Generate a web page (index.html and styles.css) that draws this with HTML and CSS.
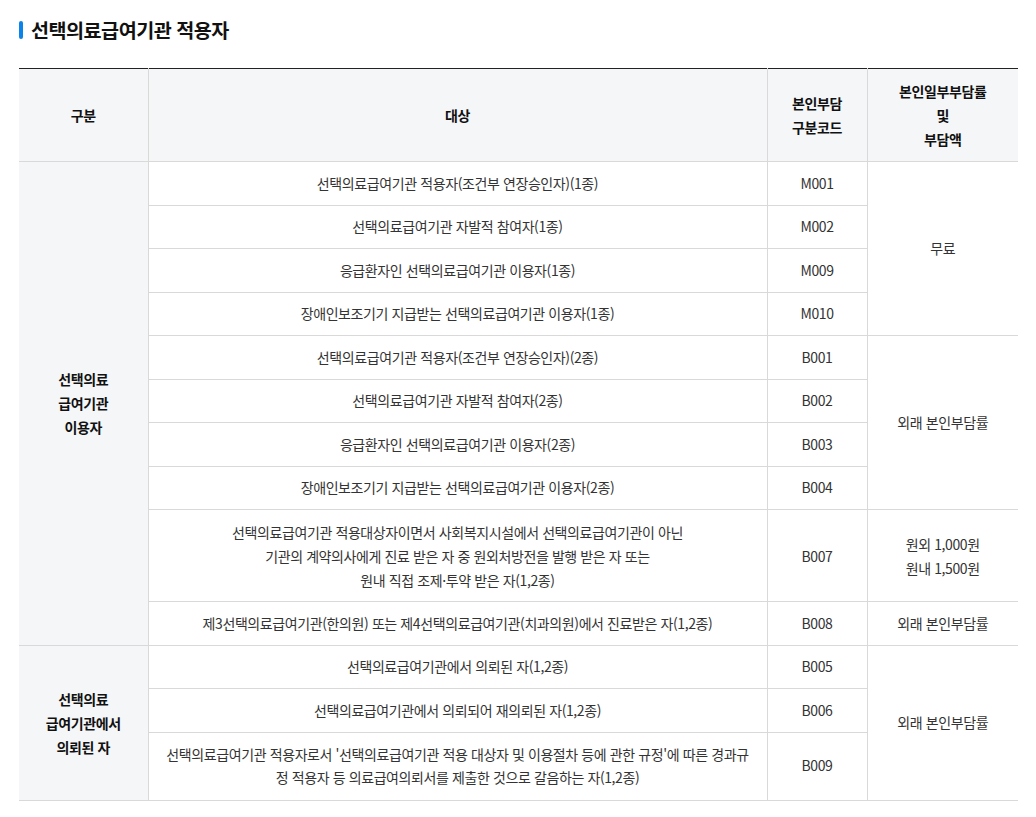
FILE: index.html
```html
<!DOCTYPE html>
<html lang="ko">
<head>
<meta charset="utf-8">
<link rel="stylesheet" href="styles.css">
</head>
<body>
<div class="wrap">
  <h2 class="title">선택의료급여기관 적용자</h2>
  <table class="tbl">
    <colgroup>
      <col class="c1"><col class="c2"><col class="c3"><col class="c4">
    </colgroup>
    <thead>
      <tr>
        <th>구분</th>
        <th>대상</th>
        <th>본인부담<br>구분코드</th>
        <th>본인일부부담률<br>및<br>부담액</th>
      </tr>
    </thead>
    <tbody>
      <tr>
        <th rowspan="10" class="grp">선택의료<br>급여기관<br>이용자</th>
        <td>선택의료급여기관 적용자(조건부 연장승인자)(1종)</td>
        <td>M001</td>
        <td rowspan="4">무료</td>
      </tr>
      <tr><td>선택의료급여기관 자발적 참여자(1종)</td><td>M002</td></tr>
      <tr><td>응급환자인 선택의료급여기관 이용자(1종)</td><td>M009</td></tr>
      <tr><td>장애인보조기기 지급받는 선택의료급여기관 이용자(1종)</td><td>M010</td></tr>
      <tr>
        <td>선택의료급여기관 적용자(조건부 연장승인자)(2종)</td>
        <td>B001</td>
        <td rowspan="4">외래 본인부담률</td>
      </tr>
      <tr><td>선택의료급여기관 자발적 참여자(2종)</td><td>B002</td></tr>
      <tr><td>응급환자인 선택의료급여기관 이용자(2종)</td><td>B003</td></tr>
      <tr><td>장애인보조기기 지급받는 선택의료급여기관 이용자(2종)</td><td>B004</td></tr>
      <tr class="tall">
        <td>선택의료급여기관 적용대상자이면서 사회복지시설에서 선택의료급여기관이 아닌<br>기관의 계약의사에게 진료 받은 자 중 원외처방전을 발행 받은 자 또는<br>원내 직접 조제·투약 받은 자(1,2종)</td>
        <td>B007</td>
        <td>원외 1,000원<br>원내 1,500원</td>
      </tr>
      <tr>
        <td>제3선택의료급여기관(한의원) 또는 제4선택의료급여기관(치과의원)에서 진료받은 자(1,2종)</td>
        <td>B008</td>
        <td>외래 본인부담률</td>
      </tr>
      <tr>
        <th rowspan="3" class="grp">선택의료<br>급여기관에서<br>의뢰된 자</th>
        <td>선택의료급여기관에서 의뢰된 자(1,2종)</td>
        <td>B005</td>
        <td rowspan="3">외래 본인부담률</td>
      </tr>
      <tr><td>선택의료급여기관에서 의뢰되어 재의뢰된 자(1,2종)</td><td>B006</td></tr>
      <tr class="two">
        <td>선택의료급여기관 적용자로서 '선택의료급여기관 적용 대상자 및 이용절차 등에 관한 규정'에 따른 경과규<br>정 적용자 등 의료급여의뢰서를 제출한 것으로 갈음하는 자(1,2종)</td>
        <td>B009</td>
      </tr>
    </tbody>
  </table>
</div>
</body>
</html>
```

FILE: styles.css
```css
* { box-sizing: border-box; }
html, body { margin: 0; padding: 0; background: #fff; }
body {
  font-family: "Noto Sans CJK KR", "Noto Sans", sans-serif;
  color: #333;
  font-size: 14px;
}
.wrap { padding: 17px 18px 0 19px; }
.title {
  display: flex;
  align-items: center;
  gap: 8px;
  margin: 0 0 25px;
  font-size: 19.6px;
  line-height: 26px;
  font-weight: 700;
  color: #111;
  letter-spacing: -0.5px;
}
.title::before {
  content: "";
  width: 4px;
  height: 18px;
  border-radius: 2px;
  background: #0a84e8;
}
.tbl {
  width: 999px;
  border-collapse: collapse;
  border-top: 1px solid #222;
  border-bottom: 1px solid #d9d9d9;
  table-layout: fixed;
}
.c1 { width: 129px; }
.c2 { width: 619px; }
.c3 { width: 100px; }
.c4 { width: 151px; }
.tbl tbody tr { height: 43.5px; }
.tbl th, .tbl td {
  border: 1px solid #d9d9d9;
  text-align: center;
  vertical-align: middle;
  padding: 9.5px 6px;
  line-height: 23px;
  letter-spacing: -0.4px;
}
.tbl thead th { border-top: 1px solid #222; }
.tbl tr > :first-child { border-left: none; }
.tbl tr > :last-child { border-right: none; }
.tbl tbody tr > td:first-child { border-left: 1px solid #d9d9d9; }
.tbl thead th {
  background: #f5f6f8;
  color: #111;
  font-weight: 700;
  padding: 10px 6px;
  line-height: 24px;
}
.tbl th.grp {
  background: #f5f6f8;
  color: #111;
  font-weight: 700;
  line-height: 24px;
}
.tbl td { color: #333; font-weight: 400; }
.tbl tr.tall td { line-height: 24px; padding-top: 9.5px; padding-bottom: 9.5px; }
.tbl tr.two td { line-height: 23.5px; padding-top: 10px; padding-bottom: 10px; }
```
